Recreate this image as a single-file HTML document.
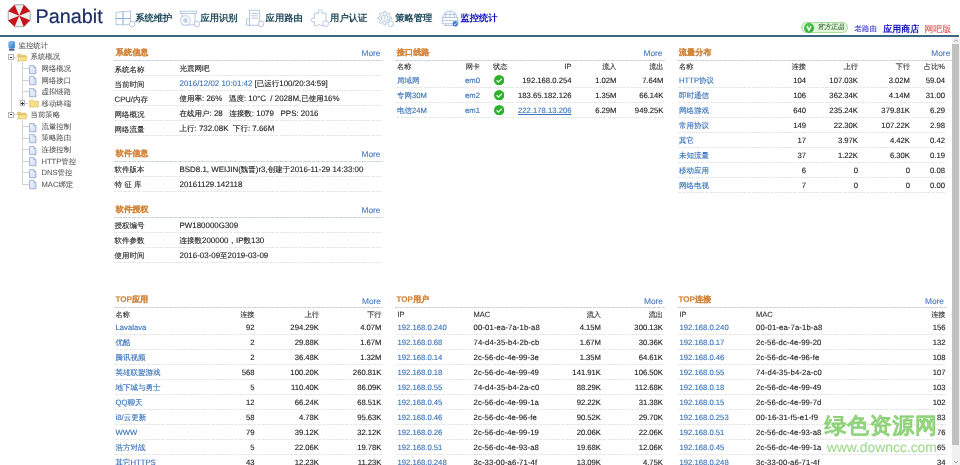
<!DOCTYPE html><html><head><meta charset="utf-8"><style>
html,body{margin:0;padding:0;width:960px;height:465px;overflow:hidden;background:#fff}
body{position:relative;font-family:"Liberation Sans",sans-serif;color:#2b2b2b;text-rendering:geometricPrecision}
.a{position:absolute;white-space:pre}
.t{-webkit-text-stroke:0.12px currentColor}
.dash{height:1px;background:repeating-linear-gradient(90deg,#c8d4de 0 3.6px,#edf2f5 3.6px 4.6px)}
.sep{height:1px;background:repeating-linear-gradient(90deg,#e8e8e8 0 3.4px,#f9f9f9 3.4px 4.6px)}
u{text-decoration:underline}
#root{position:absolute;left:0;top:0;width:960px;height:465px;filter:blur(0.35px)}
</style></head><body><div id="root">

<svg class="a" style="left:0;top:0" width="40" height="32" viewBox="0 0 40 32"><polygon points="30.19,11.15 23.75,4.71 14.65,4.71 8.21,11.15 8.21,20.25 14.65,26.69 23.75,26.69 30.19,20.25" fill="#eeeeee" stroke="#a0a0a0" stroke-width="0.9"/><polygon points="19.2,15.7 30.19,11.15 23.75,4.71" fill="#c8121b"/><polygon points="19.2,15.7 14.65,4.71 8.21,11.15" fill="#c8121b"/><polygon points="19.2,15.7 8.21,20.25 14.65,26.69" fill="#c8121b"/><polygon points="19.2,15.7 23.75,26.69 30.19,20.25" fill="#c8121b"/></svg>
<div class="a t" style="top:7.20px;font-size:19.800px;line-height:20.00px;left:35.60px;color:#1a2d66;-webkit-text-stroke:0.2px #1a2d66;">Panabit</div>
<svg class="a" style="left:114px;top:9px" width="22" height="19" viewBox="0 0 22 19" fill="none" stroke="#a3bbdc" stroke-width="0.8">
 <path d="M2,3.5 L8.5,2.6 L16.5,2 L16.5,15.5 L8.5,15.8 L2,15.6 Z"/><path d="M9,2.6 V15.8 M2,9.5 H16.5" stroke="#8eaee0" stroke-width="1.1"/>
 <circle cx="18" cy="15.3" r="2.8" fill="#fff"/></svg>
<svg class="a" style="left:179px;top:9px" width="22" height="19" viewBox="0 0 22 19" fill="none" stroke="#a3bbdc" stroke-width="0.8">
 <rect x="1.2" y="2.2" width="16.5" height="2.3"/><path d="M3,4.5 V15.8 H16 V4.5"/><circle cx="6.4" cy="11.5" r="4.8" fill="#fff"/><circle cx="6.4" cy="11.5" r="1.8" fill="#c8d6f0"/>
 <circle cx="18" cy="15" r="2.8" fill="#fff"/></svg>
<svg class="a" style="left:245px;top:9px" width="22" height="19" viewBox="0 0 22 19" fill="none" stroke="#a3bbdc" stroke-width="0.8">
 <rect x="1.6" y="10" width="3" height="6.2"/><rect x="4.4" y="1.2" width="10.3" height="15" fill="#fff"/><path d="M6.2,4.5 H13 M6.2,6.8 H13 M6.2,9.2 H13"/>
 <circle cx="16" cy="14.8" r="2.8" fill="#fff"/></svg>
<svg class="a" style="left:309px;top:9px" width="22" height="19" viewBox="0 0 22 19" fill="none" stroke="#a3bbdc" stroke-width="0.8">
 <path d="M5.4,4.2 H9.7 A2,2 0 1 1 12.7,4.2 H17 V16.7 H12 A1.8,1.8 0 0 0 8.6,16.7 H5.4 V12.4 A2,2 0 1 1 5.4,9.4 Z" fill="#fff"/>
 <circle cx="16.6" cy="14.6" r="2.9" fill="#fff"/></svg>
<svg class="a" style="left:376px;top:9px" width="22" height="19" viewBox="0 0 22 19" fill="none" stroke="#a3bbdc" stroke-width="0.8">
 <path d="M13.58,8.11 L15.45,8.39 L15.45,10.01 L13.58,10.29 L12.92,11.88 L14.05,13.40 L12.90,14.55 L11.38,13.42 L9.79,14.08 L9.51,15.95 L7.89,15.95 L7.61,14.08 L6.02,13.42 L4.50,14.55 L3.35,13.40 L4.48,11.88 L3.82,10.29 L1.95,10.01 L1.95,8.39 L3.82,8.11 L4.48,6.52 L3.35,5.00 L4.50,3.85 L6.02,4.98 L7.61,4.32 L7.89,2.45 L9.51,2.45 L9.79,4.32 L11.38,4.98 L12.90,3.85 L14.05,5.00 L12.92,6.52 Z"/><circle cx="8.7" cy="9.2" r="3.3"/><path d="M8.7,11 V7.5 M7.6,8.6 L8.7,7.5 L9.8,8.6" stroke-width="0.6"/>
 <circle cx="14.7" cy="14.8" r="2.8" fill="#fff"/></svg>
<svg class="a" style="left:441px;top:9px" width="22" height="19" viewBox="0 0 22 19" fill="none" stroke="#a3bbdc" stroke-width="0.8">
 <path d="M2,9 A7,7 0 0 1 16,9"/><path d="M9,2 V9 M5.5,3.2 Q4.5,6 4.6,9 M12.5,3.2 Q13.5,6 13.4,9 M3,5.6 H15"/><rect x="1.2" y="8.6" width="15.6" height="6.2" fill="#fff"/><path d="M1.2,11.6 H16.8 M4.5,14.8 V16.5 M13.5,14.8 V16.5 M3,16.5 H15"/>
 <circle cx="14.3" cy="14.8" r="3" fill="#3a78d0" stroke="#fff" stroke-width="0.5"/><path d="M12.9,14.9 L13.9,15.9 L15.7,13.7" stroke="#fff" stroke-width="0.8"/></svg>
<div class="a" style="top:8.00px;font-size:7.700px;line-height:20.00px;left:135.20px;color:#214b5d;font-weight:bold;"><span style="font-size:9.3px">系统维护</span></div>
<div class="a" style="top:8.00px;font-size:7.700px;line-height:20.00px;left:200.40px;color:#214b5d;font-weight:bold;"><span style="font-size:9.3px">应用识别</span></div>
<div class="a" style="top:8.00px;font-size:7.700px;line-height:20.00px;left:265.60px;color:#214b5d;font-weight:bold;"><span style="font-size:9.3px">应用路由</span></div>
<div class="a" style="top:8.00px;font-size:7.700px;line-height:20.00px;left:330.10px;color:#214b5d;font-weight:bold;"><span style="font-size:9.3px">用户认证</span></div>
<div class="a" style="top:8.00px;font-size:7.700px;line-height:20.00px;left:395.20px;color:#214b5d;font-weight:bold;"><span style="font-size:9.3px">策略管理</span></div>
<div class="a" style="top:8.00px;font-size:7.700px;line-height:20.00px;left:460.40px;color:#1212c4;font-weight:bold;"><span style="font-size:9.3px">监控统计</span></div>
<div class="a" style="left:800.5px;top:21.5px;width:47.5px;height:11.8px;border-radius:6px;background:#e2f7da;border:0.8px solid #a9dc9c;box-sizing:border-box"></div>
<div class="a" style="left:804px;top:22.5px;width:10px;height:10px;border-radius:50%;background:radial-gradient(circle at 40% 35%,#5fd05f,#1f9a2a)"></div>
<svg class="a" style="left:804px;top:22.5px" width="10" height="10" viewBox="0 0 10 10"><path d="M3,3.2 L5,7.2 L7,3.2" fill="none" stroke="#fff" stroke-width="1.4"/></svg>
<div class="a" style="top:17.60px;font-size:6.600px;line-height:20.00px;left:817.60px;color:#5a845a;font-weight:bold;font-style:italic;">官方正品</div>
<div class="a t" style="top:18.80px;font-size:7.400px;line-height:20.00px;left:854.60px;color:#3c3cd0;">老路由</div>
<div class="a" style="top:19.00px;font-size:7.700px;line-height:20.00px;left:883.20px;color:#1414c0;font-weight:bold;"><span style="font-size:9.0px">应用商店</span></div>
<div class="a t" style="top:19.00px;font-size:9.000px;line-height:20.00px;left:924.20px;color:#e25a5a;">网吧版</div>
<div class="a" style="left:0;top:34.8px;width:959px;height:1.8px;background:#3a6780"></div>
<div class="a" style="left:952px;top:37px;width:8px;height:428px;background:#f0f0f0"></div>
<div class="a" style="left:952.2px;top:44px;width:7px;height:401.3px;background:#c1c1c1"></div>
<svg class="a" style="left:952px;top:37px" width="8" height="7" viewBox="0 0 8 7"><path d="M2,4.6 L4,2.8 L6,4.6" fill="none" stroke="#8a8a8a" stroke-width="0.8"/></svg>
<svg class="a" style="left:952px;top:458px" width="8" height="7" viewBox="0 0 8 7"><path d="M2,3 L4,4.8 L6,3" fill="none" stroke="#8a8a8a" stroke-width="0.8"/></svg>
<div class="a" style="left:10.5px;top:60.5px;width:1px;height:51.5px;background:#d2d2d2"></div>
<div class="a" style="left:22px;top:62px;width:1px;height:38.5px;background:#d2d2d2"></div>
<div class="a" style="left:22px;top:119.5px;width:1px;height:65.0px;background:#d2d2d2"></div>
<div class="a" style="left:22.5px;top:68.14px;width:6.5px;height:1px;background:#d2d2d2"></div>
<div class="a" style="left:22.5px;top:79.71000000000001px;width:6.5px;height:1px;background:#d2d2d2"></div>
<div class="a" style="left:22.5px;top:91.28px;width:6.5px;height:1px;background:#d2d2d2"></div>
<div class="a" style="left:22.5px;top:125.99000000000001px;width:6.5px;height:1px;background:#d2d2d2"></div>
<div class="a" style="left:22.5px;top:137.56px;width:6.5px;height:1px;background:#d2d2d2"></div>
<div class="a" style="left:22.5px;top:149.13px;width:6.5px;height:1px;background:#d2d2d2"></div>
<div class="a" style="left:22.5px;top:160.7px;width:6.5px;height:1px;background:#d2d2d2"></div>
<div class="a" style="left:22.5px;top:172.27px;width:6.5px;height:1px;background:#d2d2d2"></div>
<div class="a" style="left:22.5px;top:183.84px;width:6.5px;height:1px;background:#d2d2d2"></div>
<div class="a" style="left:13.8px;top:56.57px;width:3.1999999999999993px;height:1px;background:#d2d2d2"></div>
<div class="a" style="left:13.8px;top:114.42px;width:3.1999999999999993px;height:1px;background:#d2d2d2"></div>
<div class="a" style="left:25.2px;top:102.85px;width:3.3000000000000007px;height:1px;background:#d2d2d2"></div>
<svg class="a" style="left:8px;top:40.5px" width="7.5" height="10.5" viewBox="0 0 7.5 10.5"><defs><linearGradient id="cg" x1="0" y1="0" x2="1" y2="1"><stop offset="0" stop-color="#8fd0f8"/><stop offset="1" stop-color="#2a74d0"/></linearGradient></defs><rect x="0.7" y="0.5" width="6" height="6.6" rx="1.2" fill="url(#cg)" stroke="#3b6fb8" stroke-width="0.4"/><path d="M1.2,7.4 H6.2 L6.6,9.6 H0.8 Z" fill="#4a5b9e"/><rect x="2" y="9.3" width="4" height="0.9" fill="#7a86b8"/></svg>
<div class="a" style="left:8.2px;top:54.17px;width:5.6px;height:5.8px;border:0.8px solid #b4b4b4;box-sizing:border-box;background:#fafafa"></div>
<div class="a" style="left:9.6px;top:56.62px;width:2.8px;height:0.9px;background:#333"></div>
<div class="a" style="left:19.5px;top:100.44999999999999px;width:5.6px;height:5.8px;border:0.8px solid #b4b4b4;box-sizing:border-box;background:#fafafa"></div>
<div class="a" style="left:20.9px;top:102.89999999999999px;width:2.8px;height:0.9px;background:#333"></div>
<div class="a" style="left:21.85px;top:101.75px;width:0.9px;height:3.1px;background:#333"></div>
<div class="a" style="left:8.3px;top:112.02px;width:5.6px;height:5.8px;border:0.8px solid #b4b4b4;box-sizing:border-box;background:#fafafa"></div>
<div class="a" style="left:9.700000000000001px;top:114.47px;width:2.8px;height:0.9px;background:#333"></div>
<svg class="a" style="left:17px;top:52.77px" width="11" height="9" viewBox="0 0 11 9"><path d="M0.6,1.2 H3.8 L4.8,2.2 H8.8 V4 H0.6 Z" fill="#e9cf6e" stroke="#cfae55" stroke-width="0.5"/><path d="M0.6,8 L1.8,3.8 H10.4 L9.2,8 Z" fill="#f8e390" stroke="#cfae55" stroke-width="0.5"/></svg>
<svg class="a" style="left:28.5px;top:99.05px" width="11" height="9" viewBox="0 0 11 9"><path d="M0.6,1.2 H3.8 L4.8,2.2 H9.4 V8 H0.6 Z" fill="#f6df86" stroke="#cfae55" stroke-width="0.5"/></svg>
<svg class="a" style="left:17.3px;top:110.62px" width="11" height="9" viewBox="0 0 11 9"><path d="M0.6,1.2 H3.8 L4.8,2.2 H8.8 V4 H0.6 Z" fill="#e9cf6e" stroke="#cfae55" stroke-width="0.5"/><path d="M0.6,8 L1.8,3.8 H10.4 L9.2,8 Z" fill="#f8e390" stroke="#cfae55" stroke-width="0.5"/></svg>
<svg class="a" style="left:29px;top:64.74px" width="8" height="10" viewBox="0 0 8 10"><defs><linearGradient id="dg" x1="0" y1="0" x2="1" y2="1"><stop offset="0" stop-color="#f4f8ff"/><stop offset="1" stop-color="#cfdcf4"/></linearGradient></defs><path d="M0.6,0.6 H4.8 L6.9,2.7 V8.8 H0.6 Z" fill="url(#dg)" stroke="#8596bd" stroke-width="0.7"/><path d="M4.8,0.6 V2.7 H6.9" fill="none" stroke="#8596bd" stroke-width="0.5"/></svg>
<svg class="a" style="left:29px;top:76.31px" width="8" height="10" viewBox="0 0 8 10"><defs><linearGradient id="dg" x1="0" y1="0" x2="1" y2="1"><stop offset="0" stop-color="#f4f8ff"/><stop offset="1" stop-color="#cfdcf4"/></linearGradient></defs><path d="M0.6,0.6 H4.8 L6.9,2.7 V8.8 H0.6 Z" fill="url(#dg)" stroke="#8596bd" stroke-width="0.7"/><path d="M4.8,0.6 V2.7 H6.9" fill="none" stroke="#8596bd" stroke-width="0.5"/></svg>
<svg class="a" style="left:29px;top:87.88px" width="8" height="10" viewBox="0 0 8 10"><defs><linearGradient id="dg" x1="0" y1="0" x2="1" y2="1"><stop offset="0" stop-color="#f4f8ff"/><stop offset="1" stop-color="#cfdcf4"/></linearGradient></defs><path d="M0.6,0.6 H4.8 L6.9,2.7 V8.8 H0.6 Z" fill="url(#dg)" stroke="#8596bd" stroke-width="0.7"/><path d="M4.8,0.6 V2.7 H6.9" fill="none" stroke="#8596bd" stroke-width="0.5"/></svg>
<svg class="a" style="left:29px;top:122.59px" width="8" height="10" viewBox="0 0 8 10"><defs><linearGradient id="dg" x1="0" y1="0" x2="1" y2="1"><stop offset="0" stop-color="#f4f8ff"/><stop offset="1" stop-color="#cfdcf4"/></linearGradient></defs><path d="M0.6,0.6 H4.8 L6.9,2.7 V8.8 H0.6 Z" fill="url(#dg)" stroke="#8596bd" stroke-width="0.7"/><path d="M4.8,0.6 V2.7 H6.9" fill="none" stroke="#8596bd" stroke-width="0.5"/></svg>
<svg class="a" style="left:29px;top:134.16px" width="8" height="10" viewBox="0 0 8 10"><defs><linearGradient id="dg" x1="0" y1="0" x2="1" y2="1"><stop offset="0" stop-color="#f4f8ff"/><stop offset="1" stop-color="#cfdcf4"/></linearGradient></defs><path d="M0.6,0.6 H4.8 L6.9,2.7 V8.8 H0.6 Z" fill="url(#dg)" stroke="#8596bd" stroke-width="0.7"/><path d="M4.8,0.6 V2.7 H6.9" fill="none" stroke="#8596bd" stroke-width="0.5"/></svg>
<svg class="a" style="left:29px;top:145.73px" width="8" height="10" viewBox="0 0 8 10"><defs><linearGradient id="dg" x1="0" y1="0" x2="1" y2="1"><stop offset="0" stop-color="#f4f8ff"/><stop offset="1" stop-color="#cfdcf4"/></linearGradient></defs><path d="M0.6,0.6 H4.8 L6.9,2.7 V8.8 H0.6 Z" fill="url(#dg)" stroke="#8596bd" stroke-width="0.7"/><path d="M4.8,0.6 V2.7 H6.9" fill="none" stroke="#8596bd" stroke-width="0.5"/></svg>
<svg class="a" style="left:29px;top:157.29999999999998px" width="8" height="10" viewBox="0 0 8 10"><defs><linearGradient id="dg" x1="0" y1="0" x2="1" y2="1"><stop offset="0" stop-color="#f4f8ff"/><stop offset="1" stop-color="#cfdcf4"/></linearGradient></defs><path d="M0.6,0.6 H4.8 L6.9,2.7 V8.8 H0.6 Z" fill="url(#dg)" stroke="#8596bd" stroke-width="0.7"/><path d="M4.8,0.6 V2.7 H6.9" fill="none" stroke="#8596bd" stroke-width="0.5"/></svg>
<svg class="a" style="left:29px;top:168.87px" width="8" height="10" viewBox="0 0 8 10"><defs><linearGradient id="dg" x1="0" y1="0" x2="1" y2="1"><stop offset="0" stop-color="#f4f8ff"/><stop offset="1" stop-color="#cfdcf4"/></linearGradient></defs><path d="M0.6,0.6 H4.8 L6.9,2.7 V8.8 H0.6 Z" fill="url(#dg)" stroke="#8596bd" stroke-width="0.7"/><path d="M4.8,0.6 V2.7 H6.9" fill="none" stroke="#8596bd" stroke-width="0.5"/></svg>
<svg class="a" style="left:29px;top:180.44px" width="8" height="10" viewBox="0 0 8 10"><defs><linearGradient id="dg" x1="0" y1="0" x2="1" y2="1"><stop offset="0" stop-color="#f4f8ff"/><stop offset="1" stop-color="#cfdcf4"/></linearGradient></defs><path d="M0.6,0.6 H4.8 L6.9,2.7 V8.8 H0.6 Z" fill="url(#dg)" stroke="#8596bd" stroke-width="0.7"/><path d="M4.8,0.6 V2.7 H6.9" fill="none" stroke="#8596bd" stroke-width="0.5"/></svg>
<div class="a t" style="top:35.80px;font-size:7.600px;line-height:20.00px;left:18.50px;color:#555;-webkit-text-stroke:0.05px #555;"><span style="font-size:7.4px">监控统计</span></div>
<div class="a t" style="top:47.37px;font-size:7.600px;line-height:20.00px;left:30.50px;color:#555;-webkit-text-stroke:0.05px #555;"><span style="font-size:7.4px">系统概况</span></div>
<div class="a t" style="top:58.94px;font-size:7.600px;line-height:20.00px;left:41.50px;color:#555;-webkit-text-stroke:0.05px #555;"><span style="font-size:7.4px">网络概况</span></div>
<div class="a t" style="top:70.51px;font-size:7.600px;line-height:20.00px;left:41.50px;color:#555;-webkit-text-stroke:0.05px #555;"><span style="font-size:7.4px">网络接口</span></div>
<div class="a t" style="top:82.08px;font-size:7.600px;line-height:20.00px;left:41.50px;color:#555;-webkit-text-stroke:0.05px #555;"><span style="font-size:7.4px">虚拟链路</span></div>
<div class="a t" style="top:93.65px;font-size:7.600px;line-height:20.00px;left:41.50px;color:#555;-webkit-text-stroke:0.05px #555;"><span style="font-size:7.4px">移动终端</span></div>
<div class="a t" style="top:105.22px;font-size:7.600px;line-height:20.00px;left:30.50px;color:#555;-webkit-text-stroke:0.05px #555;"><span style="font-size:7.4px">当前策略</span></div>
<div class="a t" style="top:116.79px;font-size:7.600px;line-height:20.00px;left:41.50px;color:#555;-webkit-text-stroke:0.05px #555;"><span style="font-size:7.4px">流量控制</span></div>
<div class="a t" style="top:128.36px;font-size:7.600px;line-height:20.00px;left:41.50px;color:#555;-webkit-text-stroke:0.05px #555;"><span style="font-size:7.4px">策略路由</span></div>
<div class="a t" style="top:139.93px;font-size:7.600px;line-height:20.00px;left:41.50px;color:#555;-webkit-text-stroke:0.05px #555;"><span style="font-size:7.4px">连接控制</span></div>
<div class="a t" style="top:151.50px;font-size:7.600px;line-height:20.00px;left:41.50px;color:#555;-webkit-text-stroke:0.05px #555;">HTTP<span style="font-size:7.4px">管控</span></div>
<div class="a t" style="top:163.07px;font-size:7.600px;line-height:20.00px;left:41.50px;color:#555;-webkit-text-stroke:0.05px #555;">DNS<span style="font-size:7.4px">管控</span></div>
<div class="a t" style="top:174.64px;font-size:7.600px;line-height:20.00px;left:41.50px;color:#555;-webkit-text-stroke:0.05px #555;">MAC<span style="font-size:7.4px">绑定</span></div>
<div class="a" style="top:43.40px;font-size:8.100px;line-height:20.00px;left:115.80px;color:#d3863d;font-weight:bold;-webkit-text-stroke:0.15px #d3863d;"><span style="font-size:8.2px">系统信息</span></div>
<div class="a t" style="top:43.10px;font-size:8.400px;line-height:20.00px;right:579.50px;text-align:right;color:#4a7cc0;">More</div>
<div class="a dash" style="left:114px;top:59.9px;width:269px"></div>
<div class="a t" style="top:59.50px;font-size:7.700px;line-height:20.00px;left:114.60px;color:#2a2a2a;"><span style="font-size:7.5px">系统名称</span></div>
<div class="a t" style="top:59.00px;font-size:7.950px;line-height:20.00px;left:179.50px;color:#222;"><span style="font-size:7.5px">光震网吧</span></div>
<div class="a sep" style="left:114px;top:74.9px;width:268px"></div>
<div class="a t" style="top:74.50px;font-size:7.700px;line-height:20.00px;left:114.60px;color:#2a2a2a;"><span style="font-size:7.5px">当前时间</span></div>
<div class="a t" style="top:74.00px;font-size:7.950px;line-height:20.00px;left:179.50px;color:#222;"><span style="color:#3b74b8">2016/12/02 10:01:42</span> [<span style="font-size:7.5px">已运行</span>100/20:34:59]</div>
<div class="a sep" style="left:114px;top:89.9px;width:268px"></div>
<div class="a t" style="top:89.50px;font-size:7.700px;line-height:20.00px;left:114.60px;color:#2a2a2a;">CPU/<span style="font-size:7.5px">内存</span></div>
<div class="a t" style="top:89.00px;font-size:7.950px;line-height:20.00px;left:179.50px;color:#222;"><span style="font-size:7.5px">使用率</span>: 26%   <span style="font-size:7.5px">温度</span>: 10<span style="font-size:7.5px">°</span>C  / 2028M,<span style="font-size:7.5px">已使用</span>16%</div>
<div class="a sep" style="left:114px;top:104.9px;width:268px"></div>
<div class="a t" style="top:104.50px;font-size:7.700px;line-height:20.00px;left:114.60px;color:#2a2a2a;"><span style="font-size:7.5px">网络概况</span></div>
<div class="a t" style="top:104.00px;font-size:7.950px;line-height:20.00px;left:179.50px;color:#222;"><span style="font-size:7.5px">在线用户</span>: 28   <span style="font-size:7.5px">连接数</span>: 1079   PPS: 2016</div>
<div class="a sep" style="left:114px;top:119.9px;width:268px"></div>
<div class="a t" style="top:119.50px;font-size:7.700px;line-height:20.00px;left:114.60px;color:#2a2a2a;"><span style="font-size:7.5px">网络流量</span></div>
<div class="a t" style="top:119.00px;font-size:7.950px;line-height:20.00px;left:179.50px;color:#222;"><span style="font-size:7.5px">上行</span>: 732.08K  <span style="font-size:7.5px">下行</span>: 7.66M</div>
<div class="a sep" style="left:114px;top:134.9px;width:268px"></div>
<div class="a" style="top:144.20px;font-size:8.100px;line-height:20.00px;left:115.80px;color:#d3863d;font-weight:bold;-webkit-text-stroke:0.15px #d3863d;"><span style="font-size:8.2px">软件信息</span></div>
<div class="a t" style="top:143.90px;font-size:8.400px;line-height:20.00px;right:579.50px;text-align:right;color:#4a7cc0;">More</div>
<div class="a dash" style="left:114px;top:160.7px;width:269px"></div>
<div class="a t" style="top:160.30px;font-size:7.700px;line-height:20.00px;left:114.60px;color:#2a2a2a;"><span style="font-size:7.5px">软件版本</span></div>
<div class="a t" style="top:159.80px;font-size:7.950px;line-height:20.00px;left:179.50px;color:#222;">BSD8.1, WEIJIN(<span style="font-size:7.5px">魏晋</span>)r3,<span style="font-size:7.5px">创建于</span>2016-11-29 14:33:00</div>
<div class="a sep" style="left:114px;top:175.7px;width:268px"></div>
<div class="a t" style="top:175.30px;font-size:7.700px;line-height:20.00px;left:114.60px;color:#2a2a2a;"><span style="font-size:7.5px">特</span> <span style="font-size:7.5px">征</span> <span style="font-size:7.5px">库</span></div>
<div class="a t" style="top:174.80px;font-size:7.950px;line-height:20.00px;left:179.50px;color:#222;">20161129.142118</div>
<div class="a sep" style="left:114px;top:190.7px;width:268px"></div>
<div class="a" style="top:200.30px;font-size:8.100px;line-height:20.00px;left:115.80px;color:#d3863d;font-weight:bold;-webkit-text-stroke:0.15px #d3863d;"><span style="font-size:8.2px">软件授权</span></div>
<div class="a t" style="top:200.00px;font-size:8.400px;line-height:20.00px;right:579.50px;text-align:right;color:#4a7cc0;">More</div>
<div class="a dash" style="left:114px;top:216.8px;width:269px"></div>
<div class="a t" style="top:216.40px;font-size:7.700px;line-height:20.00px;left:114.60px;color:#2a2a2a;"><span style="font-size:7.5px">授权编号</span></div>
<div class="a t" style="top:215.90px;font-size:7.950px;line-height:20.00px;left:179.50px;color:#222;">PW180000G309</div>
<div class="a sep" style="left:114px;top:231.8px;width:268px"></div>
<div class="a t" style="top:231.40px;font-size:7.700px;line-height:20.00px;left:114.60px;color:#2a2a2a;"><span style="font-size:7.5px">软件参数</span></div>
<div class="a t" style="top:230.90px;font-size:7.950px;line-height:20.00px;left:179.50px;color:#222;"><span style="font-size:7.5px">连接数</span>200000<span style="font-size:7.5px">，</span>IP<span style="font-size:7.5px">数</span>130</div>
<div class="a sep" style="left:114px;top:246.8px;width:268px"></div>
<div class="a t" style="top:246.40px;font-size:7.700px;line-height:20.00px;left:114.60px;color:#2a2a2a;"><span style="font-size:7.5px">使用时间</span></div>
<div class="a t" style="top:245.90px;font-size:7.950px;line-height:20.00px;left:179.50px;color:#222;">2016-03-09<span style="font-size:7.5px">至</span>2019-03-09</div>
<div class="a sep" style="left:114px;top:261.8px;width:268px"></div>
<div class="a" style="top:43.30px;font-size:8.100px;line-height:20.00px;left:396.80px;color:#d3863d;font-weight:bold;-webkit-text-stroke:0.15px #d3863d;"><span style="font-size:8.2px">接口线路</span></div>
<div class="a t" style="top:43.00px;font-size:8.400px;line-height:20.00px;right:297.50px;text-align:right;color:#4a7cc0;">More</div>
<div class="a dash" style="left:395px;top:59.8px;width:270px"></div>
<div class="a t" style="top:57.40px;font-size:7.500px;line-height:20.00px;left:397.00px;color:#333;"><span style="font-size:7.2px">名称</span></div>
<div class="a t" style="top:57.40px;font-size:7.500px;line-height:20.00px;right:480.00px;text-align:right;color:#333;"><span style="font-size:7.2px">网卡</span></div>
<div class="a t" style="top:57.40px;font-size:7.500px;line-height:20.00px;left:493.00px;color:#333;"><span style="font-size:7.2px">状态</span></div>
<div class="a t" style="top:57.40px;font-size:7.500px;line-height:20.00px;right:388.50px;text-align:right;color:#333;">IP</div>
<div class="a t" style="top:57.40px;font-size:7.500px;line-height:20.00px;right:343.50px;text-align:right;color:#333;"><span style="font-size:7.2px">流入</span></div>
<div class="a t" style="top:57.40px;font-size:7.500px;line-height:20.00px;right:296.50px;text-align:right;color:#333;"><span style="font-size:7.2px">流出</span></div>
<div class="a t" style="top:70.60px;font-size:7.700px;line-height:20.00px;left:397.00px;color:#3571b8;"><span style="font-size:7.5px">局域网</span></div>
<div class="a t" style="top:70.60px;font-size:7.700px;line-height:20.00px;right:480.00px;text-align:right;color:#3571b8;">em0</div>
<svg class="a" style="left:494px;top:75.10px" width="10.4" height="10.4" viewBox="0 0 10.4 10.4"><circle cx="5.2" cy="5.2" r="5.2" fill="#2bb22b"/><path d="M2.6,5.3 L4.5,7.1 L7.9,3.6" fill="none" stroke="#e8ffe8" stroke-width="1.3"/></svg>
<div class="a t" style="top:70.60px;font-size:7.700px;line-height:20.00px;right:388.50px;text-align:right;color:#222;">192.168.0.254</div>
<div class="a t" style="top:70.60px;font-size:7.700px;line-height:20.00px;right:343.50px;text-align:right;color:#222;">1.02M</div>
<div class="a t" style="top:70.60px;font-size:7.700px;line-height:20.00px;right:296.50px;text-align:right;color:#222;">7.64M</div>
<div class="a sep" style="left:396px;top:86.8px;width:268px"></div>
<div class="a t" style="top:85.60px;font-size:7.700px;line-height:20.00px;left:397.00px;color:#3571b8;"><span style="font-size:7.5px">专网</span>30M</div>
<div class="a t" style="top:85.60px;font-size:7.700px;line-height:20.00px;right:480.00px;text-align:right;color:#3571b8;">em2</div>
<svg class="a" style="left:494px;top:90.10px" width="10.4" height="10.4" viewBox="0 0 10.4 10.4"><circle cx="5.2" cy="5.2" r="5.2" fill="#2bb22b"/><path d="M2.6,5.3 L4.5,7.1 L7.9,3.6" fill="none" stroke="#e8ffe8" stroke-width="1.3"/></svg>
<div class="a t" style="top:85.60px;font-size:7.700px;line-height:20.00px;right:388.50px;text-align:right;color:#222;">183.65.182.126</div>
<div class="a t" style="top:85.60px;font-size:7.700px;line-height:20.00px;right:343.50px;text-align:right;color:#222;">1.35M</div>
<div class="a t" style="top:85.60px;font-size:7.700px;line-height:20.00px;right:296.50px;text-align:right;color:#222;">66.14K</div>
<div class="a sep" style="left:396px;top:101.8px;width:268px"></div>
<div class="a t" style="top:100.60px;font-size:7.700px;line-height:20.00px;left:397.00px;color:#3571b8;"><span style="font-size:7.5px">电信</span>24M</div>
<div class="a t" style="top:100.60px;font-size:7.700px;line-height:20.00px;right:480.00px;text-align:right;color:#3571b8;">em1</div>
<svg class="a" style="left:494px;top:105.10px" width="10.4" height="10.4" viewBox="0 0 10.4 10.4"><circle cx="5.2" cy="5.2" r="5.2" fill="#2bb22b"/><path d="M2.6,5.3 L4.5,7.1 L7.9,3.6" fill="none" stroke="#e8ffe8" stroke-width="1.3"/></svg>
<div class="a t" style="top:100.60px;font-size:7.700px;line-height:20.00px;right:388.50px;text-align:right;color:#222;"><u style="color:#3b74b8">222.178.13.206</u></div>
<div class="a t" style="top:100.60px;font-size:7.700px;line-height:20.00px;right:343.50px;text-align:right;color:#222;">6.29M</div>
<div class="a t" style="top:100.60px;font-size:7.700px;line-height:20.00px;right:296.50px;text-align:right;color:#222;">949.25K</div>
<div class="a sep" style="left:396px;top:116.8px;width:268px"></div>
<div class="a" style="top:43.30px;font-size:8.100px;line-height:20.00px;left:678.80px;color:#d3863d;font-weight:bold;-webkit-text-stroke:0.15px #d3863d;"><span style="font-size:8.2px">流量分布</span></div>
<div class="a t" style="top:43.00px;font-size:8.400px;line-height:20.00px;right:9.70px;text-align:right;color:#4a7cc0;">More</div>
<div class="a dash" style="left:677px;top:59.8px;width:275px"></div>
<div class="a t" style="top:57.40px;font-size:7.500px;line-height:20.00px;left:679.00px;color:#333;"><span style="font-size:7.2px">名称</span></div>
<div class="a t" style="top:57.40px;font-size:7.500px;line-height:20.00px;right:154.00px;text-align:right;color:#333;"><span style="font-size:7.2px">连接</span></div>
<div class="a t" style="top:57.40px;font-size:7.500px;line-height:20.00px;right:102.00px;text-align:right;color:#333;"><span style="font-size:7.2px">上行</span></div>
<div class="a t" style="top:57.40px;font-size:7.500px;line-height:20.00px;right:50.00px;text-align:right;color:#333;"><span style="font-size:7.2px">下行</span></div>
<div class="a t" style="top:57.40px;font-size:7.500px;line-height:20.00px;right:15.00px;text-align:right;color:#333;"><span style="font-size:7.2px">占比</span>%</div>
<div class="a t" style="top:70.60px;font-size:7.700px;line-height:20.00px;left:679.00px;color:#3571b8;">HTTP<span style="font-size:7.5px">协议</span></div>
<div class="a t" style="top:70.60px;font-size:7.700px;line-height:20.00px;right:154.00px;text-align:right;color:#222;">104</div>
<div class="a t" style="top:70.60px;font-size:7.700px;line-height:20.00px;right:102.00px;text-align:right;color:#222;">107.03K</div>
<div class="a t" style="top:70.60px;font-size:7.700px;line-height:20.00px;right:50.00px;text-align:right;color:#222;">3.02M</div>
<div class="a t" style="top:70.60px;font-size:7.700px;line-height:20.00px;right:15.00px;text-align:right;color:#222;">59.04</div>
<div class="a sep" style="left:678px;top:86.8px;width:268px"></div>
<div class="a t" style="top:85.60px;font-size:7.700px;line-height:20.00px;left:679.00px;color:#3571b8;"><span style="font-size:7.5px">即时通信</span></div>
<div class="a t" style="top:85.60px;font-size:7.700px;line-height:20.00px;right:154.00px;text-align:right;color:#222;">106</div>
<div class="a t" style="top:85.60px;font-size:7.700px;line-height:20.00px;right:102.00px;text-align:right;color:#222;">362.34K</div>
<div class="a t" style="top:85.60px;font-size:7.700px;line-height:20.00px;right:50.00px;text-align:right;color:#222;">4.14M</div>
<div class="a t" style="top:85.60px;font-size:7.700px;line-height:20.00px;right:15.00px;text-align:right;color:#222;">31.00</div>
<div class="a sep" style="left:678px;top:101.8px;width:268px"></div>
<div class="a t" style="top:100.60px;font-size:7.700px;line-height:20.00px;left:679.00px;color:#3571b8;"><span style="font-size:7.5px">网络游戏</span></div>
<div class="a t" style="top:100.60px;font-size:7.700px;line-height:20.00px;right:154.00px;text-align:right;color:#222;">640</div>
<div class="a t" style="top:100.60px;font-size:7.700px;line-height:20.00px;right:102.00px;text-align:right;color:#222;">235.24K</div>
<div class="a t" style="top:100.60px;font-size:7.700px;line-height:20.00px;right:50.00px;text-align:right;color:#222;">379.81K</div>
<div class="a t" style="top:100.60px;font-size:7.700px;line-height:20.00px;right:15.00px;text-align:right;color:#222;">6.29</div>
<div class="a sep" style="left:678px;top:116.8px;width:268px"></div>
<div class="a t" style="top:115.60px;font-size:7.700px;line-height:20.00px;left:679.00px;color:#3571b8;"><span style="font-size:7.5px">常用协议</span></div>
<div class="a t" style="top:115.60px;font-size:7.700px;line-height:20.00px;right:154.00px;text-align:right;color:#222;">149</div>
<div class="a t" style="top:115.60px;font-size:7.700px;line-height:20.00px;right:102.00px;text-align:right;color:#222;">22.30K</div>
<div class="a t" style="top:115.60px;font-size:7.700px;line-height:20.00px;right:50.00px;text-align:right;color:#222;">107.22K</div>
<div class="a t" style="top:115.60px;font-size:7.700px;line-height:20.00px;right:15.00px;text-align:right;color:#222;">2.98</div>
<div class="a sep" style="left:678px;top:131.8px;width:268px"></div>
<div class="a t" style="top:130.60px;font-size:7.700px;line-height:20.00px;left:679.00px;color:#3571b8;"><span style="font-size:7.5px">其它</span></div>
<div class="a t" style="top:130.60px;font-size:7.700px;line-height:20.00px;right:154.00px;text-align:right;color:#222;">17</div>
<div class="a t" style="top:130.60px;font-size:7.700px;line-height:20.00px;right:102.00px;text-align:right;color:#222;">3.97K</div>
<div class="a t" style="top:130.60px;font-size:7.700px;line-height:20.00px;right:50.00px;text-align:right;color:#222;">4.42K</div>
<div class="a t" style="top:130.60px;font-size:7.700px;line-height:20.00px;right:15.00px;text-align:right;color:#222;">0.42</div>
<div class="a sep" style="left:678px;top:146.8px;width:268px"></div>
<div class="a t" style="top:145.60px;font-size:7.700px;line-height:20.00px;left:679.00px;color:#3571b8;"><span style="font-size:7.5px">未知流量</span></div>
<div class="a t" style="top:145.60px;font-size:7.700px;line-height:20.00px;right:154.00px;text-align:right;color:#222;">37</div>
<div class="a t" style="top:145.60px;font-size:7.700px;line-height:20.00px;right:102.00px;text-align:right;color:#222;">1.22K</div>
<div class="a t" style="top:145.60px;font-size:7.700px;line-height:20.00px;right:50.00px;text-align:right;color:#222;">6.30K</div>
<div class="a t" style="top:145.60px;font-size:7.700px;line-height:20.00px;right:15.00px;text-align:right;color:#222;">0.19</div>
<div class="a sep" style="left:678px;top:161.8px;width:268px"></div>
<div class="a t" style="top:160.60px;font-size:7.700px;line-height:20.00px;left:679.00px;color:#3571b8;"><span style="font-size:7.5px">移动应用</span></div>
<div class="a t" style="top:160.60px;font-size:7.700px;line-height:20.00px;right:154.00px;text-align:right;color:#222;">6</div>
<div class="a t" style="top:160.60px;font-size:7.700px;line-height:20.00px;right:102.00px;text-align:right;color:#222;">0</div>
<div class="a t" style="top:160.60px;font-size:7.700px;line-height:20.00px;right:50.00px;text-align:right;color:#222;">0</div>
<div class="a t" style="top:160.60px;font-size:7.700px;line-height:20.00px;right:15.00px;text-align:right;color:#222;">0.08</div>
<div class="a sep" style="left:678px;top:176.8px;width:268px"></div>
<div class="a t" style="top:175.60px;font-size:7.700px;line-height:20.00px;left:679.00px;color:#3571b8;"><span style="font-size:7.5px">网络电视</span></div>
<div class="a t" style="top:175.60px;font-size:7.700px;line-height:20.00px;right:154.00px;text-align:right;color:#222;">7</div>
<div class="a t" style="top:175.60px;font-size:7.700px;line-height:20.00px;right:102.00px;text-align:right;color:#222;">0</div>
<div class="a t" style="top:175.60px;font-size:7.700px;line-height:20.00px;right:50.00px;text-align:right;color:#222;">0</div>
<div class="a t" style="top:175.60px;font-size:7.700px;line-height:20.00px;right:15.00px;text-align:right;color:#222;">0.00</div>
<div class="a sep" style="left:678px;top:191.8px;width:268px"></div>
<div class="a" style="top:290.40px;font-size:8.100px;line-height:20.00px;left:115.40px;color:#d3863d;font-weight:bold;-webkit-text-stroke:0.15px #d3863d;">TOP<span style="font-size:8.2px">应用</span></div>
<div class="a t" style="top:290.50px;font-size:8.400px;line-height:20.00px;right:579.00px;text-align:right;color:#4a7cc0;">More</div>
<div class="a dash" style="left:114px;top:307.3px;width:269px"></div>
<div class="a t" style="top:304.90px;font-size:7.500px;line-height:20.00px;left:115.50px;color:#333;"><span style="font-size:7.2px">名称</span></div>
<div class="a t" style="top:304.90px;font-size:7.500px;line-height:20.00px;right:705.50px;text-align:right;color:#333;"><span style="font-size:7.2px">连接</span></div>
<div class="a t" style="top:304.90px;font-size:7.500px;line-height:20.00px;right:641.00px;text-align:right;color:#333;"><span style="font-size:7.2px">上行</span></div>
<div class="a t" style="top:304.90px;font-size:7.500px;line-height:20.00px;right:578.50px;text-align:right;color:#333;"><span style="font-size:7.2px">下行</span></div>
<div class="a t" style="top:318.10px;font-size:7.700px;line-height:20.00px;left:115.50px;color:#3571b8;">Lavalava</div>
<div class="a t" style="top:318.10px;font-size:7.700px;line-height:20.00px;right:705.50px;text-align:right;color:#222;">92</div>
<div class="a t" style="top:318.10px;font-size:7.700px;line-height:20.00px;right:641.00px;text-align:right;color:#222;">294.29K</div>
<div class="a t" style="top:318.10px;font-size:7.700px;line-height:20.00px;right:578.50px;text-align:right;color:#222;">4.07M</div>
<div class="a sep" style="left:115px;top:334.3px;width:268px"></div>
<div class="a t" style="top:333.10px;font-size:7.700px;line-height:20.00px;left:115.50px;color:#3571b8;"><span style="font-size:7.5px">优酷</span></div>
<div class="a t" style="top:333.10px;font-size:7.700px;line-height:20.00px;right:705.50px;text-align:right;color:#222;">2</div>
<div class="a t" style="top:333.10px;font-size:7.700px;line-height:20.00px;right:641.00px;text-align:right;color:#222;">29.88K</div>
<div class="a t" style="top:333.10px;font-size:7.700px;line-height:20.00px;right:578.50px;text-align:right;color:#222;">1.67M</div>
<div class="a sep" style="left:115px;top:349.3px;width:268px"></div>
<div class="a t" style="top:348.10px;font-size:7.700px;line-height:20.00px;left:115.50px;color:#3571b8;"><span style="font-size:7.5px">腾讯视频</span></div>
<div class="a t" style="top:348.10px;font-size:7.700px;line-height:20.00px;right:705.50px;text-align:right;color:#222;">2</div>
<div class="a t" style="top:348.10px;font-size:7.700px;line-height:20.00px;right:641.00px;text-align:right;color:#222;">36.48K</div>
<div class="a t" style="top:348.10px;font-size:7.700px;line-height:20.00px;right:578.50px;text-align:right;color:#222;">1.32M</div>
<div class="a sep" style="left:115px;top:364.3px;width:268px"></div>
<div class="a t" style="top:363.10px;font-size:7.700px;line-height:20.00px;left:115.50px;color:#3571b8;"><span style="font-size:7.5px">英雄联盟游戏</span></div>
<div class="a t" style="top:363.10px;font-size:7.700px;line-height:20.00px;right:705.50px;text-align:right;color:#222;">568</div>
<div class="a t" style="top:363.10px;font-size:7.700px;line-height:20.00px;right:641.00px;text-align:right;color:#222;">100.20K</div>
<div class="a t" style="top:363.10px;font-size:7.700px;line-height:20.00px;right:578.50px;text-align:right;color:#222;">260.81K</div>
<div class="a sep" style="left:115px;top:379.3px;width:268px"></div>
<div class="a t" style="top:378.10px;font-size:7.700px;line-height:20.00px;left:115.50px;color:#3571b8;"><span style="font-size:7.5px">地下城与勇士</span></div>
<div class="a t" style="top:378.10px;font-size:7.700px;line-height:20.00px;right:705.50px;text-align:right;color:#222;">5</div>
<div class="a t" style="top:378.10px;font-size:7.700px;line-height:20.00px;right:641.00px;text-align:right;color:#222;">110.40K</div>
<div class="a t" style="top:378.10px;font-size:7.700px;line-height:20.00px;right:578.50px;text-align:right;color:#222;">86.09K</div>
<div class="a sep" style="left:115px;top:394.3px;width:268px"></div>
<div class="a t" style="top:393.10px;font-size:7.700px;line-height:20.00px;left:115.50px;color:#3571b8;">QQ<span style="font-size:7.5px">聊天</span></div>
<div class="a t" style="top:393.10px;font-size:7.700px;line-height:20.00px;right:705.50px;text-align:right;color:#222;">12</div>
<div class="a t" style="top:393.10px;font-size:7.700px;line-height:20.00px;right:641.00px;text-align:right;color:#222;">66.24K</div>
<div class="a t" style="top:393.10px;font-size:7.700px;line-height:20.00px;right:578.50px;text-align:right;color:#222;">68.51K</div>
<div class="a sep" style="left:115px;top:409.3px;width:268px"></div>
<div class="a t" style="top:408.10px;font-size:7.700px;line-height:20.00px;left:115.50px;color:#3571b8;">i8/<span style="font-size:7.5px">云更新</span></div>
<div class="a t" style="top:408.10px;font-size:7.700px;line-height:20.00px;right:705.50px;text-align:right;color:#222;">58</div>
<div class="a t" style="top:408.10px;font-size:7.700px;line-height:20.00px;right:641.00px;text-align:right;color:#222;">4.78K</div>
<div class="a t" style="top:408.10px;font-size:7.700px;line-height:20.00px;right:578.50px;text-align:right;color:#222;">95.63K</div>
<div class="a sep" style="left:115px;top:424.3px;width:268px"></div>
<div class="a t" style="top:423.10px;font-size:7.700px;line-height:20.00px;left:115.50px;color:#3571b8;">WWW</div>
<div class="a t" style="top:423.10px;font-size:7.700px;line-height:20.00px;right:705.50px;text-align:right;color:#222;">79</div>
<div class="a t" style="top:423.10px;font-size:7.700px;line-height:20.00px;right:641.00px;text-align:right;color:#222;">39.12K</div>
<div class="a t" style="top:423.10px;font-size:7.700px;line-height:20.00px;right:578.50px;text-align:right;color:#222;">32.12K</div>
<div class="a sep" style="left:115px;top:439.3px;width:268px"></div>
<div class="a t" style="top:438.10px;font-size:7.700px;line-height:20.00px;left:115.50px;color:#3571b8;"><span style="font-size:7.5px">浩方对战</span></div>
<div class="a t" style="top:438.10px;font-size:7.700px;line-height:20.00px;right:705.50px;text-align:right;color:#222;">5</div>
<div class="a t" style="top:438.10px;font-size:7.700px;line-height:20.00px;right:641.00px;text-align:right;color:#222;">22.06K</div>
<div class="a t" style="top:438.10px;font-size:7.700px;line-height:20.00px;right:578.50px;text-align:right;color:#222;">19.78K</div>
<div class="a sep" style="left:115px;top:454.3px;width:268px"></div>
<div class="a t" style="top:453.10px;font-size:7.700px;line-height:20.00px;left:115.50px;color:#3571b8;"><span style="font-size:7.5px">其它</span>HTTPS</div>
<div class="a t" style="top:453.10px;font-size:7.700px;line-height:20.00px;right:705.50px;text-align:right;color:#222;">43</div>
<div class="a t" style="top:453.10px;font-size:7.700px;line-height:20.00px;right:641.00px;text-align:right;color:#222;">12.23K</div>
<div class="a t" style="top:453.10px;font-size:7.700px;line-height:20.00px;right:578.50px;text-align:right;color:#222;">11.23K</div>
<div class="a sep" style="left:115px;top:469.3px;width:268px"></div>
<div class="a" style="top:290.40px;font-size:8.100px;line-height:20.00px;left:396.40px;color:#d3863d;font-weight:bold;-webkit-text-stroke:0.15px #d3863d;">TOP<span style="font-size:8.2px">用户</span></div>
<div class="a t" style="top:290.50px;font-size:8.400px;line-height:20.00px;right:297.00px;text-align:right;color:#4a7cc0;">More</div>
<div class="a dash" style="left:395px;top:307.3px;width:270px"></div>
<div class="a t" style="top:304.90px;font-size:7.500px;line-height:20.00px;left:397.50px;color:#333;">IP</div>
<div class="a t" style="top:304.90px;font-size:7.500px;line-height:20.00px;left:473.50px;color:#333;">MAC</div>
<div class="a t" style="top:304.90px;font-size:7.500px;line-height:20.00px;right:359.00px;text-align:right;color:#333;"><span style="font-size:7.2px">流入</span></div>
<div class="a t" style="top:304.90px;font-size:7.500px;line-height:20.00px;right:297.00px;text-align:right;color:#333;"><span style="font-size:7.2px">流出</span></div>
<div class="a t" style="top:318.10px;font-size:7.700px;line-height:20.00px;left:397.50px;color:#3571b8;">192.168.0.240</div>
<div class="a t" style="top:318.10px;font-size:7.700px;line-height:20.00px;left:473.50px;color:#222;letter-spacing:0.13px;">00-01-ea-7a-1b-a8</div>
<div class="a t" style="top:318.10px;font-size:7.700px;line-height:20.00px;right:359.00px;text-align:right;color:#222;">4.15M</div>
<div class="a t" style="top:318.10px;font-size:7.700px;line-height:20.00px;right:297.00px;text-align:right;color:#222;">300.13K</div>
<div class="a sep" style="left:396px;top:334.3px;width:268px"></div>
<div class="a t" style="top:333.10px;font-size:7.700px;line-height:20.00px;left:397.50px;color:#3571b8;">192.168.0.68</div>
<div class="a t" style="top:333.10px;font-size:7.700px;line-height:20.00px;left:473.50px;color:#222;letter-spacing:0.13px;">74-d4-35-b4-2b-cb</div>
<div class="a t" style="top:333.10px;font-size:7.700px;line-height:20.00px;right:359.00px;text-align:right;color:#222;">1.67M</div>
<div class="a t" style="top:333.10px;font-size:7.700px;line-height:20.00px;right:297.00px;text-align:right;color:#222;">30.36K</div>
<div class="a sep" style="left:396px;top:349.3px;width:268px"></div>
<div class="a t" style="top:348.10px;font-size:7.700px;line-height:20.00px;left:397.50px;color:#3571b8;">192.168.0.14</div>
<div class="a t" style="top:348.10px;font-size:7.700px;line-height:20.00px;left:473.50px;color:#222;letter-spacing:0.13px;">2c-56-dc-4e-99-3e</div>
<div class="a t" style="top:348.10px;font-size:7.700px;line-height:20.00px;right:359.00px;text-align:right;color:#222;">1.35M</div>
<div class="a t" style="top:348.10px;font-size:7.700px;line-height:20.00px;right:297.00px;text-align:right;color:#222;">64.61K</div>
<div class="a sep" style="left:396px;top:364.3px;width:268px"></div>
<div class="a t" style="top:363.10px;font-size:7.700px;line-height:20.00px;left:397.50px;color:#3571b8;">192.168.0.18</div>
<div class="a t" style="top:363.10px;font-size:7.700px;line-height:20.00px;left:473.50px;color:#222;letter-spacing:0.13px;">2c-56-dc-4e-99-49</div>
<div class="a t" style="top:363.10px;font-size:7.700px;line-height:20.00px;right:359.00px;text-align:right;color:#222;">141.91K</div>
<div class="a t" style="top:363.10px;font-size:7.700px;line-height:20.00px;right:297.00px;text-align:right;color:#222;">106.50K</div>
<div class="a sep" style="left:396px;top:379.3px;width:268px"></div>
<div class="a t" style="top:378.10px;font-size:7.700px;line-height:20.00px;left:397.50px;color:#3571b8;">192.168.0.55</div>
<div class="a t" style="top:378.10px;font-size:7.700px;line-height:20.00px;left:473.50px;color:#222;letter-spacing:0.13px;">74-d4-35-b4-2a-c0</div>
<div class="a t" style="top:378.10px;font-size:7.700px;line-height:20.00px;right:359.00px;text-align:right;color:#222;">88.29K</div>
<div class="a t" style="top:378.10px;font-size:7.700px;line-height:20.00px;right:297.00px;text-align:right;color:#222;">112.68K</div>
<div class="a sep" style="left:396px;top:394.3px;width:268px"></div>
<div class="a t" style="top:393.10px;font-size:7.700px;line-height:20.00px;left:397.50px;color:#3571b8;">192.168.0.45</div>
<div class="a t" style="top:393.10px;font-size:7.700px;line-height:20.00px;left:473.50px;color:#222;letter-spacing:0.13px;">2c-56-dc-4e-99-1a</div>
<div class="a t" style="top:393.10px;font-size:7.700px;line-height:20.00px;right:359.00px;text-align:right;color:#222;">92.22K</div>
<div class="a t" style="top:393.10px;font-size:7.700px;line-height:20.00px;right:297.00px;text-align:right;color:#222;">31.38K</div>
<div class="a sep" style="left:396px;top:409.3px;width:268px"></div>
<div class="a t" style="top:408.10px;font-size:7.700px;line-height:20.00px;left:397.50px;color:#3571b8;">192.168.0.46</div>
<div class="a t" style="top:408.10px;font-size:7.700px;line-height:20.00px;left:473.50px;color:#222;letter-spacing:0.13px;">2c-56-dc-4e-96-fe</div>
<div class="a t" style="top:408.10px;font-size:7.700px;line-height:20.00px;right:359.00px;text-align:right;color:#222;">90.52K</div>
<div class="a t" style="top:408.10px;font-size:7.700px;line-height:20.00px;right:297.00px;text-align:right;color:#222;">29.70K</div>
<div class="a sep" style="left:396px;top:424.3px;width:268px"></div>
<div class="a t" style="top:423.10px;font-size:7.700px;line-height:20.00px;left:397.50px;color:#3571b8;">192.168.0.26</div>
<div class="a t" style="top:423.10px;font-size:7.700px;line-height:20.00px;left:473.50px;color:#222;letter-spacing:0.13px;">2c-56-dc-4e-99-19</div>
<div class="a t" style="top:423.10px;font-size:7.700px;line-height:20.00px;right:359.00px;text-align:right;color:#222;">20.06K</div>
<div class="a t" style="top:423.10px;font-size:7.700px;line-height:20.00px;right:297.00px;text-align:right;color:#222;">22.06K</div>
<div class="a sep" style="left:396px;top:439.3px;width:268px"></div>
<div class="a t" style="top:438.10px;font-size:7.700px;line-height:20.00px;left:397.50px;color:#3571b8;">192.168.0.51</div>
<div class="a t" style="top:438.10px;font-size:7.700px;line-height:20.00px;left:473.50px;color:#222;letter-spacing:0.13px;">2c-56-dc-4e-93-a8</div>
<div class="a t" style="top:438.10px;font-size:7.700px;line-height:20.00px;right:359.00px;text-align:right;color:#222;">19.68K</div>
<div class="a t" style="top:438.10px;font-size:7.700px;line-height:20.00px;right:297.00px;text-align:right;color:#222;">12.06K</div>
<div class="a sep" style="left:396px;top:454.3px;width:268px"></div>
<div class="a t" style="top:453.10px;font-size:7.700px;line-height:20.00px;left:397.50px;color:#3571b8;">192.168.0.248</div>
<div class="a t" style="top:453.10px;font-size:7.700px;line-height:20.00px;left:473.50px;color:#222;letter-spacing:0.13px;">3c-33-00-a6-71-4f</div>
<div class="a t" style="top:453.10px;font-size:7.700px;line-height:20.00px;right:359.00px;text-align:right;color:#222;">13.09K</div>
<div class="a t" style="top:453.10px;font-size:7.700px;line-height:20.00px;right:297.00px;text-align:right;color:#222;">4.75K</div>
<div class="a sep" style="left:396px;top:469.3px;width:268px"></div>
<div class="a" style="top:290.40px;font-size:8.100px;line-height:20.00px;left:678.40px;color:#d3863d;font-weight:bold;-webkit-text-stroke:0.15px #d3863d;">TOP<span style="font-size:8.2px">连接</span></div>
<div class="a t" style="top:290.50px;font-size:8.400px;line-height:20.00px;right:16.00px;text-align:right;color:#4a7cc0;">More</div>
<div class="a dash" style="left:677px;top:307.3px;width:270px"></div>
<div class="a t" style="top:304.90px;font-size:7.500px;line-height:20.00px;left:679.50px;color:#333;">IP</div>
<div class="a t" style="top:304.90px;font-size:7.500px;line-height:20.00px;left:756.00px;color:#333;">MAC</div>
<div class="a t" style="top:304.90px;font-size:7.500px;line-height:20.00px;right:14.50px;text-align:right;color:#333;"><span style="font-size:7.2px">连接</span></div>
<div class="a t" style="top:318.10px;font-size:7.700px;line-height:20.00px;left:679.50px;color:#3571b8;">192.168.0.240</div>
<div class="a t" style="top:318.10px;font-size:7.700px;line-height:20.00px;left:756.00px;color:#222;letter-spacing:0.13px;">00-01-ea-7a-1b-a8</div>
<div class="a t" style="top:318.10px;font-size:7.700px;line-height:20.00px;right:14.50px;text-align:right;color:#222;">156</div>
<div class="a sep" style="left:678px;top:334.3px;width:268px"></div>
<div class="a t" style="top:333.10px;font-size:7.700px;line-height:20.00px;left:679.50px;color:#3571b8;">192.168.0.17</div>
<div class="a t" style="top:333.10px;font-size:7.700px;line-height:20.00px;left:756.00px;color:#222;letter-spacing:0.13px;">2c-56-dc-4e-99-20</div>
<div class="a t" style="top:333.10px;font-size:7.700px;line-height:20.00px;right:14.50px;text-align:right;color:#222;">132</div>
<div class="a sep" style="left:678px;top:349.3px;width:268px"></div>
<div class="a t" style="top:348.10px;font-size:7.700px;line-height:20.00px;left:679.50px;color:#3571b8;">192.168.0.46</div>
<div class="a t" style="top:348.10px;font-size:7.700px;line-height:20.00px;left:756.00px;color:#222;letter-spacing:0.13px;">2c-56-dc-4e-96-fe</div>
<div class="a t" style="top:348.10px;font-size:7.700px;line-height:20.00px;right:14.50px;text-align:right;color:#222;">108</div>
<div class="a sep" style="left:678px;top:364.3px;width:268px"></div>
<div class="a t" style="top:363.10px;font-size:7.700px;line-height:20.00px;left:679.50px;color:#3571b8;">192.168.0.55</div>
<div class="a t" style="top:363.10px;font-size:7.700px;line-height:20.00px;left:756.00px;color:#222;letter-spacing:0.13px;">74-d4-35-b4-2a-c0</div>
<div class="a t" style="top:363.10px;font-size:7.700px;line-height:20.00px;right:14.50px;text-align:right;color:#222;">107</div>
<div class="a sep" style="left:678px;top:379.3px;width:268px"></div>
<div class="a t" style="top:378.10px;font-size:7.700px;line-height:20.00px;left:679.50px;color:#3571b8;">192.168.0.18</div>
<div class="a t" style="top:378.10px;font-size:7.700px;line-height:20.00px;left:756.00px;color:#222;letter-spacing:0.13px;">2c-56-dc-4e-99-49</div>
<div class="a t" style="top:378.10px;font-size:7.700px;line-height:20.00px;right:14.50px;text-align:right;color:#222;">103</div>
<div class="a sep" style="left:678px;top:394.3px;width:268px"></div>
<div class="a t" style="top:393.10px;font-size:7.700px;line-height:20.00px;left:679.50px;color:#3571b8;">192.168.0.15</div>
<div class="a t" style="top:393.10px;font-size:7.700px;line-height:20.00px;left:756.00px;color:#222;letter-spacing:0.13px;">2c-56-dc-4e-99-7d</div>
<div class="a t" style="top:393.10px;font-size:7.700px;line-height:20.00px;right:14.50px;text-align:right;color:#222;">102</div>
<div class="a sep" style="left:678px;top:409.3px;width:268px"></div>
<div class="a t" style="top:408.10px;font-size:7.700px;line-height:20.00px;left:679.50px;color:#3571b8;">192.168.0.253</div>
<div class="a t" style="top:408.10px;font-size:7.700px;line-height:20.00px;left:756.00px;color:#222;letter-spacing:0.13px;">00-16-31-f5-e1-f9</div>
<div class="a t" style="top:408.10px;font-size:7.700px;line-height:20.00px;right:14.50px;text-align:right;color:#222;">83</div>
<div class="a sep" style="left:678px;top:424.3px;width:268px"></div>
<div class="a t" style="top:423.10px;font-size:7.700px;line-height:20.00px;left:679.50px;color:#3571b8;">192.168.0.51</div>
<div class="a t" style="top:423.10px;font-size:7.700px;line-height:20.00px;left:756.00px;color:#222;letter-spacing:0.13px;">2c-56-dc-4e-93-a8</div>
<div class="a t" style="top:423.10px;font-size:7.700px;line-height:20.00px;right:14.50px;text-align:right;color:#222;">76</div>
<div class="a sep" style="left:678px;top:439.3px;width:268px"></div>
<div class="a t" style="top:438.10px;font-size:7.700px;line-height:20.00px;left:679.50px;color:#3571b8;">192.168.0.45</div>
<div class="a t" style="top:438.10px;font-size:7.700px;line-height:20.00px;left:756.00px;color:#222;letter-spacing:0.13px;">2c-56-dc-4e-99-1a</div>
<div class="a t" style="top:438.10px;font-size:7.700px;line-height:20.00px;right:14.50px;text-align:right;color:#222;">65</div>
<div class="a sep" style="left:678px;top:454.3px;width:268px"></div>
<div class="a t" style="top:453.10px;font-size:7.700px;line-height:20.00px;left:679.50px;color:#3571b8;">192.168.0.248</div>
<div class="a t" style="top:453.10px;font-size:7.700px;line-height:20.00px;left:756.00px;color:#222;letter-spacing:0.13px;">3c-33-00-a6-71-4f</div>
<div class="a t" style="top:453.10px;font-size:7.700px;line-height:20.00px;right:14.50px;text-align:right;color:#222;">34</div>
<div class="a sep" style="left:678px;top:469.3px;width:268px"></div>
<div class="a" style="top:416.20px;font-size:22.000px;line-height:20.00px;left:824.50px;color:rgba(135,208,110,.78);font-weight:bold;letter-spacing:0.6px;-webkit-text-stroke:0.25px rgba(135,208,110,.78);">绿色资源网</div>
<div class="a t" style="top:437.30px;font-size:13.850px;line-height:20.00px;left:826.80px;color:rgba(135,208,110,.78);">www.downcc.com</div>
</div></body></html>
